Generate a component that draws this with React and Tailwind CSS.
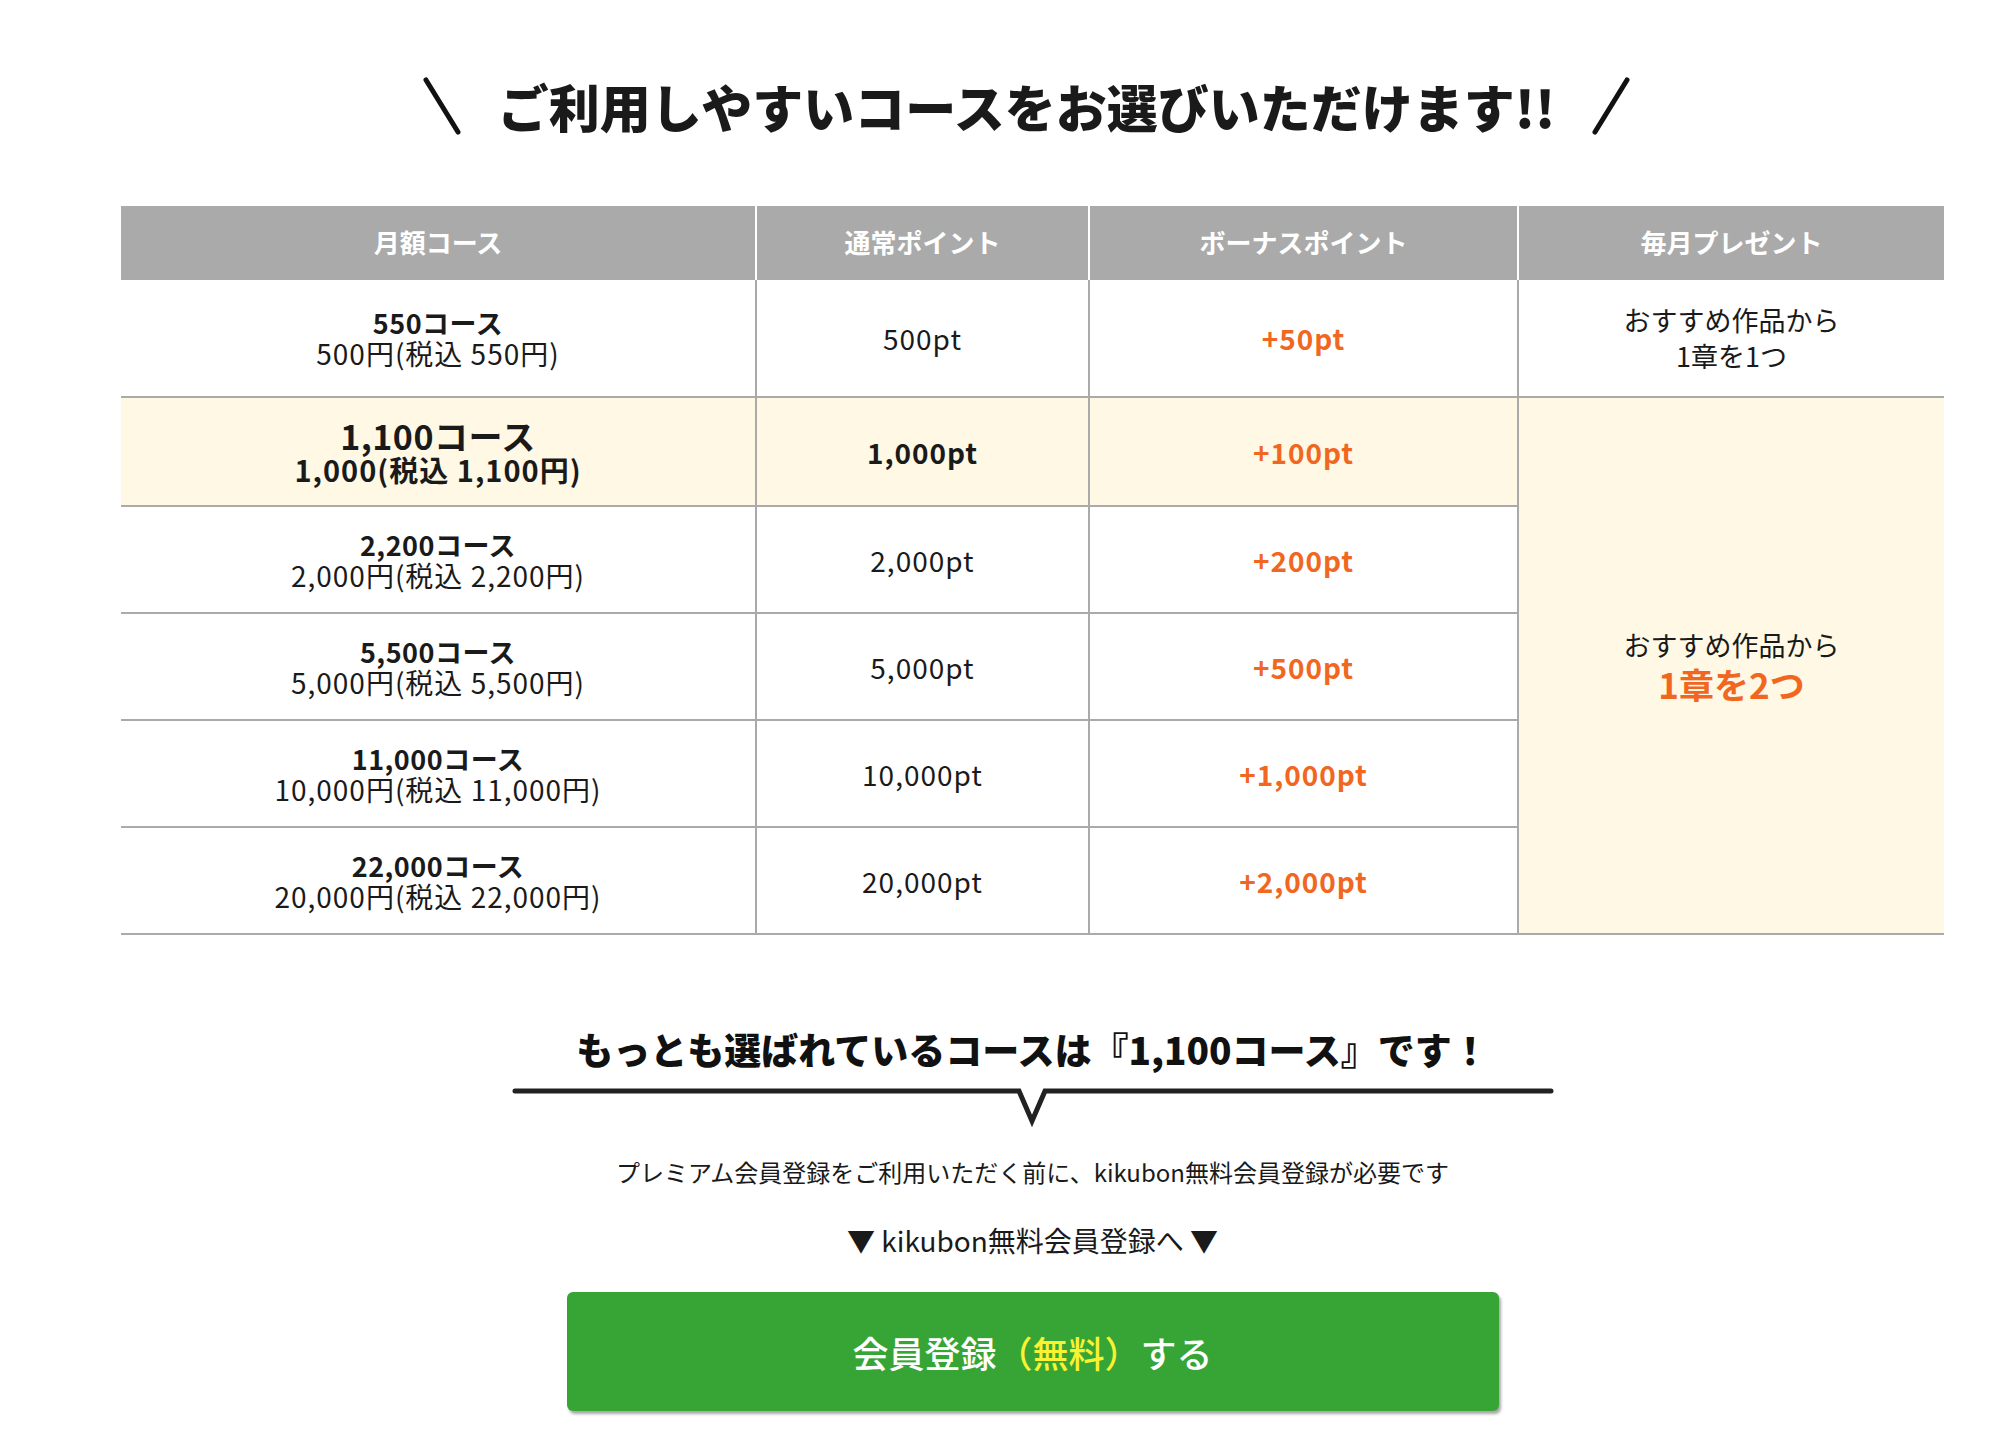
import React from 'react';

const courses = [
  { name: '2,200コース', price: '2,000円(税込 2,200円)', pt: '2,000pt', bonus: '+200pt' },
  { name: '5,500コース', price: '5,000円(税込 5,500円)', pt: '5,000pt', bonus: '+500pt' },
  { name: '11,000コース', price: '10,000円(税込 11,000円)', pt: '10,000pt', bonus: '+1,000pt' },
  { name: '22,000コース', price: '20,000円(税込 22,000円)', pt: '20,000pt', bonus: '+2,000pt' },
];

const Slash = ({ flip }) => (
  <svg width="40" height="60" viewBox="0 0 40 60" className="shrink-0">
    {flip ? (
      <line x1="36" y1="4" x2="4" y2="56" stroke="#111" strokeWidth="5" strokeLinecap="round" />
    ) : (
      <line x1="4" y1="4" x2="36" y2="56" stroke="#111" strokeWidth="5" strokeLinecap="round" />
    )}
  </svg>
);

const App = () => {
  return (
    <div className="min-h-[1442px] bg-white text-[#1a1a1a] font-['Noto_Sans_CJK_JP','Noto_Sans',sans-serif]">
      <div className="ml-[121px] w-[1823px] pt-[76px]">
        {/* title */}
        <div className="flex h-[60px] items-center justify-center gap-[36px] pr-[12px]">
          <Slash />
          <h2 className="text-[51px] font-black leading-none whitespace-nowrap">
            ご利用しやすいコースをお選びいただけます!!
          </h2>
          <Slash flip />
        </div>

        {/* course table */}
        <table className="mt-[70px] w-full table-fixed border-separate border-spacing-0 text-center">
          <colgroup>
            <col className="w-[634px]" />
            <col className="w-[333px]" />
            <col className="w-[429px]" />
            <col className="w-[427px]" />
          </colgroup>
          <thead>
            <tr className="h-[74px] bg-[#aaaaaa] text-[26px] text-white">
              <th className="pb-[4px] font-bold">月額コース</th>
              <th className="border-l-2 border-white pb-[4px] font-bold">通常ポイント</th>
              <th className="border-l-2 border-white pb-[4px] font-bold">ボーナスポイント</th>
              <th className="border-l-2 border-white pb-[4px] font-bold">毎月プレゼント</th>
            </tr>
          </thead>
          <tbody>
            <tr className="h-[118px]">
              <td className="border-b-2 border-[#aaaaaa]">
                <div className="text-[27px] font-bold leading-[31px] tracking-[0.5px]">550コース</div>
                <div className="text-[28px] leading-[31px] tracking-[1px]">500円(税込 550円)</div>
              </td>
              <td className="border-b-2 border-l-2 border-[#aaaaaa] text-[28px] tracking-[1px]">500pt</td>
              <td className="border-b-2 border-l-2 border-[#aaaaaa] text-[28px] font-bold tracking-[1px] text-[#f1671f]">+50pt</td>
              <td className="border-b-2 border-l-2 border-[#aaaaaa] text-[27px] leading-[36px]">
                おすすめ作品から
                <br />
                1章を1つ
              </td>
            </tr>
            <tr className="h-[109px] bg-[#fef8e5]">
              <td className="border-b-2 border-[#aaaaaa]">
                <div className="text-[34px] font-bold leading-[35px] tracking-[0.5px]">1,100コース</div>
                <div className="text-[29px] font-bold leading-[33px] tracking-[1px]">1,000(税込 1,100円)</div>
              </td>
              <td className="border-b-2 border-l-2 border-[#aaaaaa] text-[28px] font-bold tracking-[1px]">1,000pt</td>
              <td className="border-b-2 border-l-2 border-[#aaaaaa] text-[28px] font-bold tracking-[1px] text-[#f1671f]">+100pt</td>
              <td rowSpan={5} className="border-b-2 border-l-2 border-[#aaaaaa] bg-[#fef8e5]">
                <div className="text-[27px] leading-[36px]">おすすめ作品から</div>
                <div className="text-[35px] font-bold leading-[42px] text-[#f1671f]">1章を2つ</div>
              </td>
            </tr>
            {courses.map((c) => (
              <tr key={c.name} className="h-[107px]">
                <td className="border-b-2 border-[#aaaaaa]">
                  <div className="text-[27px] font-bold leading-[31px] tracking-[0.5px]">{c.name}</div>
                  <div className="text-[28px] leading-[31px] tracking-[1px]">{c.price}</div>
                </td>
                <td className="border-b-2 border-l-2 border-[#aaaaaa] text-[28px] tracking-[1px]">{c.pt}</td>
                <td className="border-b-2 border-l-2 border-[#aaaaaa] text-[28px] font-bold tracking-[1px] text-[#f1671f]">{c.bonus}</td>
              </tr>
            ))}
          </tbody>
        </table>

        {/* bottom */}
        <div className="flex flex-col items-center">
          <p className="mt-[96px] text-[37px] font-black leading-none text-[#111]">
            もっとも選ばれているコースは『1,100コース』です！
          </p>
          <svg width="1042" height="40" viewBox="0 0 1042 40" className="mt-[19px]">
            <path
              d="M3 4 H507 L520 34 L533 4 H1039"
              fill="none"
              stroke="#222"
              strokeWidth="5"
              strokeLinecap="round"
              strokeLinejoin="miter"
            />
          </svg>
          <p className="mt-[33px] text-[24px] leading-none">
            プレミアム会員登録をご利用いただく前に、kikubon無料会員登録が必要です
          </p>
          <p className="mt-[42px] text-[28px] leading-none">▼ kikubon無料会員登録へ ▼</p>
          <button className="mt-[38px] flex h-[119px] w-[932px] items-center justify-center rounded-[6px] bg-[#36a535] text-[36px] font-medium text-white shadow-[2px_3px_3px_rgba(0,0,0,0.35)]">
            会員登録<span className="text-[#f8f232]">（無料）</span>する
          </button>
        </div>
      </div>
    </div>
  );
};

export default App;
